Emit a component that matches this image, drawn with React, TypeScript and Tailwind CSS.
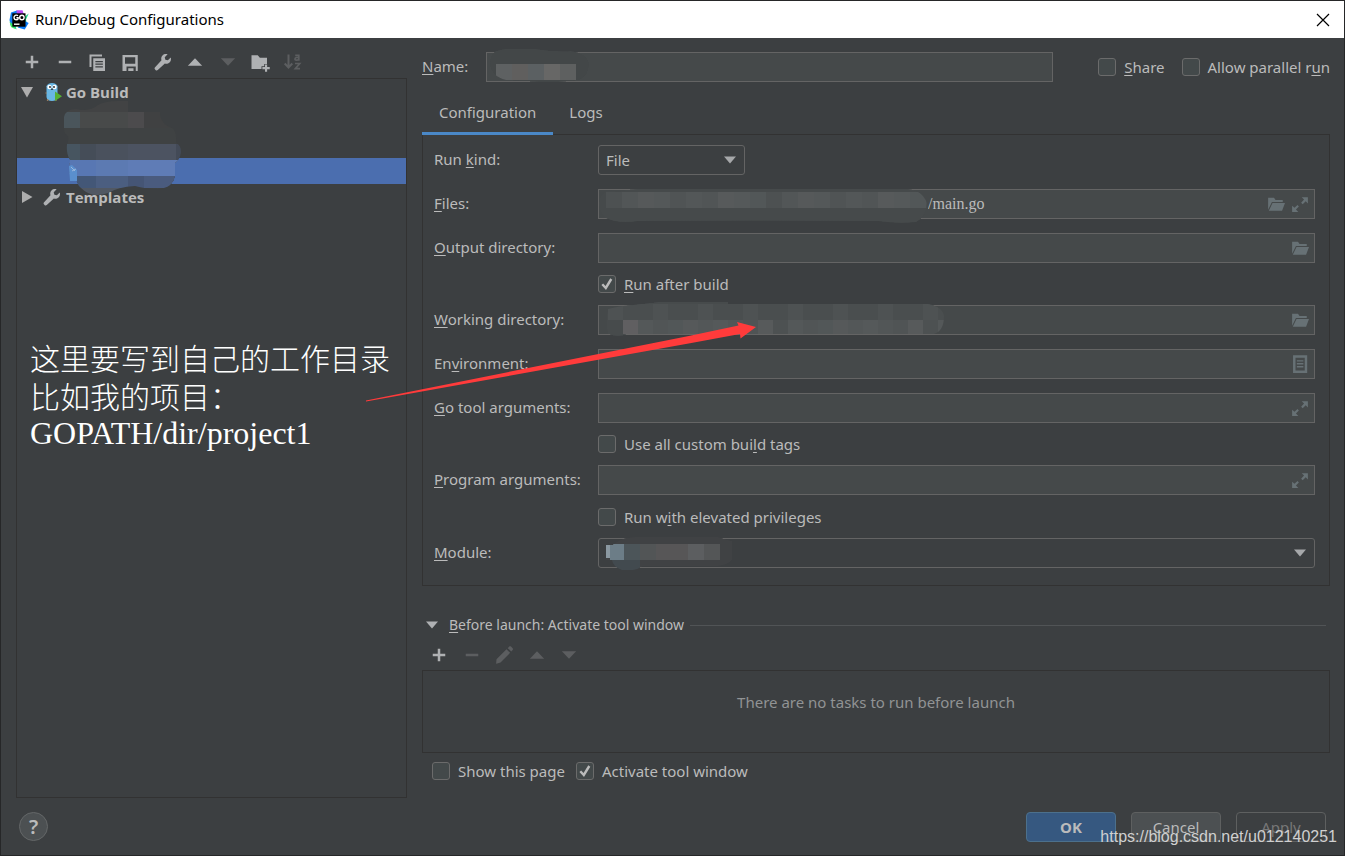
import React from "react";

type IconProps = { className?: string; children: React.ReactNode };

function Icon({ className = "text-[#afb1b3]", children }: IconProps) {
  return (
    <svg viewBox="0 0 16 16" aria-hidden="true" className={"size-5 " + className} fill="currentColor">
      {children}
    </svg>
  );
}

const shapes = {
  add: <path d="M7 3h2v4h4v2H9v4H7V9H3V7h4z" />,
  remove: <path d="M3 7h10v2H3z" />,
  copy: (
    <>
      <path d="M2 2h10v1.6H3.6V12H2z" />
      <path fillRule="evenodd" d="M5 5h9.4v10.2H5zM6.7 7.1v1h6v-1zM6.7 9.2v1h6v-1zM6.7 11.3v1h6v-1z" />
    </>
  ),
  save: <path fillRule="evenodd" d="M2 2.4h12.2v12.8H12.6v-3.6H5.2v3.6H2zM4 4.2v5.2h8.2V4.2zM6.6 13h4.2v2.2H6.6z" />,
  wrench: (
    <path d="M14.2 4.3 11.9 6.6 9.9 6.1 9.4 4.1 11.7 1.8C10.200 1.3 8.600 1.700 7.600 2.700 6.600 3.700 6.300 5.200 6.800 6.500L1.500 12.400C1.100 12.900 1.200 13.500 1.700 14L2.200 14.500C2.700 14.900 3.300 14.900 3.800 14.400L9.500 9.200C10.800 9.600 12.200 9.300 13.200 8.300 14.300 7.300 14.700 5.700 14.200 4.300z" />
  ),
  up: <path d="M2.300 11h11.400L8 5z" />,
  down: <path d="M2.300 5h11.400L8 11z" />,
  newFolder: (
    <path d="M1.200 2.600h5l1.700 1.900h5.700v5h-2.200v1.900H9.200v2.200H1.200zM12 10h1.700v2h2.100v1.700h-2.100v2.100H12v-2.100H9.900V12H12z" />
  ),
  pencil: <path d="M10 3.400 12.900 6.200 5.200 14 1.900 14.900 1.700 14.700 2 11.300zM11 2.500 12.200 1.200C12.600.8 13.200.8 13.600 1.200L14.900 2.500C15.300 2.900 15.300 3.500 14.900 3.900L13.800 5.200z" />,
  folder: <path d="M1 13V2.500h5.200L7.600 4.500H14v1.800H4.400zM4.900 7.200H16L13.400 14H1.600z" />,
  expand: <path d="M9.500 2H15v5.500L13.100 5.600 10.400 8.200 9 6.800 11.600 4zM1 9.500 3.100 11.400 5.800 8.800 7 10.200 4.400 12.900 6.500 15H1z" />,
  document: (
    <path fillRule="evenodd" d="M1.800.2h12.600v15.800H1.800zM4 2.400v11.400h8.200V2.400zM5.200 4.600v1.200h5.800V4.600zM5.200 7.200v1.200h5.800V7.200zM5.200 9.800v1.200h5.800V9.800z" />
  ),
};

function SortIcon() {
  return (
    <svg viewBox="0 0 20 20" aria-hidden="true" className="size-5 text-[#5c5e60]" fill="none" stroke="currentColor">
      <path strokeWidth="2" d="M5.500 2.500v12M1.700 11.500l3.800 4 3.800-4" />
      <path strokeWidth="1.700" d="M12.200 3.300h3.600V8.700M15.800 5.500h-2.300q-1.500.2-1.500 1.500t1.500 1.200 2.300-1M12 11.500h4.700l-4.400 5.200h4.700" />
    </svg>
  );
}

function ToolButton({ label, disabled, children }: { label: string; disabled?: boolean; children: React.ReactNode }) {
  return (
    <button type="button" aria-label={label} disabled={disabled} className="size-5 shrink-0">
      {children}
    </button>
  );
}

const DIM = "text-[#5c5e60]";

function GoLandLogo() {
  return (
    <svg viewBox="0 0 20 20" aria-hidden="true" className="size-5">
      <path fill="#0d7cf2" d="M2 2.500 8 .5l3 5-5 8-4 2.500L.5 10z" />
      <path fill="#b74af7" d="M7.500.3h6L15 5 8 6z" />
      <path fill="#21d789" d="M19.700 3.500 17 9.500 18 16l-4-8zM1.500 13l5 2 1 4.500L2 16z" />
      <path fill="#087cfa" d="M14 10l5.700 3-4 6.500-7-2z" />
      <path fill="#3bea62" d="M.5 11.500 5 16l1 3-4-2z" />
      <path fill="#000" d="M3.300 3.300h13.200v13.400H3.300z" />
      <g fill="none" stroke="#fff" strokeWidth="1.400">
        <path d="M9 5.800Q7.800 4.700 6.300 5.300 5 6 5 7.500 5.200 9.800 7.200 9.800q1.500 0 1.900-.8V7.700H7.400" />
        <circle cx="12.900" cy="7.500" r="2.200" />
        <path d="M5 14.200h5.500" />
      </g>
    </svg>
  );
}

function GopherIcon() {
  return (
    <svg viewBox="0 0 18 20" aria-hidden="true" className="h-5 w-[18px]">
      <path fill="#69b7e4" d="M3 3.500Q4 1 8 1t5 2.500q1 .3.500 1.700V15q-.5 4-5.500 4t-5.500-4V5.200Q1.800 3.800 3 3.500z" />
      <path stroke="#b08c66" strokeWidth="1.200" d="M1.500 11h1.200M3 18.500l1.500-1M12.500 18.500l-1.500-1" />
      <circle cx="5.500" cy="5" r="2.200" fill="#fff" />
      <circle cx="10.500" cy="5" r="2.200" fill="#fff" />
      <circle cx="6" cy="5" r=".9" fill="#222" />
      <circle cx="10" cy="5" r=".9" fill="#222" />
      <ellipse cx="8" cy="7.300" rx="1.200" ry=".8" fill="#333" />
      <path fill="#55b134" d="M11 9.500v9.500l7-4.700z" />
    </svg>
  );
}

const fieldBox = "h-[30px] w-full border border-[#646464] bg-[#45494a] px-2 text-[#bbbbbb] outline-none";

function Check({ id, checked, children }: { id: string; checked?: boolean; children: React.ReactNode }) {
  return (
    <div className="flex items-center gap-2 whitespace-nowrap">
      <span className="relative grid size-[18px] shrink-0 place-items-center">
        <input
          id={id}
          type="checkbox"
          defaultChecked={checked}
          className="peer size-[18px] appearance-none rounded-[3px] border border-[#6b6b6b] bg-[#43494a]"
        />
        <svg
          viewBox="0 0 18 18"
          aria-hidden="true"
          className="pointer-events-none invisible absolute inset-0 size-[18px] peer-checked:visible"
          fill="none"
          stroke="#bbbbbb"
          strokeWidth="2.400"
        >
          <path d="M4.300 9.200 7.800 13 13.300 4" />
        </svg>
      </span>
      <label htmlFor={id}>{children}</label>
    </div>
  );
}

function Row({ id, label, children }: { id: string; label: React.ReactNode; children: React.ReactNode }) {
  return (
    <div className="flex h-11 items-center">
      <label htmlFor={id} className="w-[164px] shrink-0 pb-[2px] whitespace-nowrap">
        {label}
      </label>
      <div className="relative min-w-0 flex-1">{children}</div>
    </div>
  );
}

function FieldActions({ children }: { children: React.ReactNode }) {
  return <div className="absolute inset-y-0 right-[5px] flex items-center gap-1">{children}</div>;
}

function FieldButton({ label, children }: { label: string; children: React.ReactNode }) {
  return (
    <button type="button" aria-label={label} className="grid size-5 place-items-center text-[#677175]">
      <svg viewBox="0 0 16 16" aria-hidden="true" className="size-[18px]" fill="currentColor">
        {children}
      </svg>
    </button>
  );
}

function Caret() {
  return (
    <svg viewBox="0 0 12 8" aria-hidden="true" className="pointer-events-none absolute top-[11px] right-[9px] h-2 w-3" fill="#a6a8aa">
      <path d="M0 .5h12L6 7.500z" />
    </svg>
  );
}

type Tile = [x: number, y: number, w: number, h: number, fill: string];

function Mosaic({
  id,
  box,
  outline,
  base,
  tiles,
  className,
}: {
  id: string;
  box: string;
  outline: string;
  base: string;
  tiles: Tile[];
  className: string;
}) {
  return (
    <svg viewBox={box} aria-hidden="true" className={"pointer-events-none absolute " + className}>
      <clipPath id={id}>
        <path d={outline} />
      </clipPath>
      <g clipPath={"url(#" + id + ")"} shapeRendering="crispEdges">
        <path d={outline} fill={base} />
        {tiles.map(([x, y, w, h, fill], i) => (
          <rect key={i} x={x} y={y} width={w} height={h} fill={fill} />
        ))}
      </g>
    </svg>
  );
}

const treeTiles: Tile[] = [
  [64, 100, 64, 12, "#424344"],
  [64, 112, 16, 16, "#4a555b"],
  [80, 112, 48, 16, "#484a4a"],
  [128, 112, 16, 16, "#4c4b4d"],
  [144, 112, 40, 16, "#404142"],
  [60, 128, 130, 16, "#3f4243"],
  [64, 144, 16, 16, "#475560"],
  [80, 144, 16, 16, "#454d58"],
  [96, 144, 32, 16, "#4a515d"],
  [128, 144, 48, 16, "#4c5361"],
  [176, 144, 8, 16, "#434a57"],
  [64, 160, 32, 16, "#5877b3"],
  [96, 160, 32, 16, "#5c7ab2"],
  [128, 160, 56, 16, "#5f7cb6"],
  [64, 176, 32, 12, "#435777"],
  [96, 176, 32, 12, "#4b5e80"],
  [128, 176, 16, 12, "#455575"],
  [144, 176, 40, 12, "#4a5b7e"],
  [72, 188, 50, 12, "#515863"],
];

const fileShades = ["#4d5152", "#525657", "#56595a", "#545859", "#505455", "#535758", "#515556", "#575a5b", "#55595a", "#525758"];

const fileTiles: Tile[] = Array.from({ length: 21 }, (_, i): Tile => [8 + i * 16, 4, 16, 16, fileShades[i % 10]]).concat([
  [8, 20, 340, 16, "#464a4b"],
]);

const workTiles: Tile[] = Array.from({ length: 23 }, (_, i): Tile => [10 + i * 15, 3, 15, 16, i % 3 ? "#4a4e4f" : "#4e5253"]).concat(
  Array.from({ length: 22 }, (_, i): Tile => [25 + i * 15, 19, 15, 14, i === 0 ? "#605f61" : fileShades[(i * 3) % 10]]),
);

const nameTiles: Tile[] = [
  [10, 16, 16, 16, "#5e6162"],
  [26, 16, 16, 16, "#605f5e"],
  [42, 16, 16, 16, "#5b6062"],
  [58, 16, 16, 16, "#676766"],
  [74, 16, 16, 16, "#5e6060"],
];

const moduleTiles: Tile[] = [
  [6, 10, 10, 14, "#8a98a1"],
  [12, 10, 14, 16, "#6c7d87"],
  [26, 10, 16, 16, "#4c5559"],
  [42, 10, 16, 16, "#525556"],
  [58, 10, 32, 16, "#575657"],
  [90, 10, 16, 16, "#5c5e60"],
  [106, 10, 16, 16, "#545657"],
  [10, 26, 32, 14, "#424a4f"],
];

function TreePanel() {
  return (
    <div className="relative flex-1 border border-[#323232]">
      <ul className="font-['Open_Sans',sans-serif] text-[15px] font-bold">
        <li className="flex h-[26px] items-center">
          <svg viewBox="0 0 12 12" aria-hidden="true" className="ml-1 size-3" fill="#adadad">
            <path d="M0 1h12L6 11.500z" />
          </svg>
          <span className="mr-1 ml-[11px]"><GopherIcon /></span>
          Go Build
        </li>
        <li className="h-[26px]" />
        <li className="h-[27px]" />
        <li className="h-[26px] bg-[#4b6eaf]" />
        <li className="flex h-[26px] items-center">
          <svg viewBox="0 0 12 12" aria-hidden="true" className="ml-1 size-3" fill="#adadad">
            <path d="M1 0v12L11.500 6z" />
          </svg>
          <span className="mr-1 ml-[9px]"><Icon>{shapes.wrench}</Icon></span>
          Templates
        </li>
      </ul>
      <Mosaic
        id="treeMask"
        box="60 99 124 98"
        className="top-[20px] left-[43px] h-[98px] w-[124px]"
        base="#3f4243"
        tiles={treeTiles}
        outline="M64 117Q66 109 76 109 90 112 98 105 105 101 118 101H128V112H160Q160 124 172 128 177 131 176 143 181 145 181 152 180 160 175 163V176Q173 188 158 189 145 189 135 186 118 187 108 193 92 199 81 188 76 184 76 176H70Q68 168 70 160 66 154 67 144 70 138 67 135 64 134 64 128z"
      />
      <svg viewBox="0 0 8 18" aria-hidden="true" className="pointer-events-none absolute top-[85px] left-[52px] h-[18px] w-2">
        <path fill="#5a8fce" d="M0 2l3-1 5 5v11H1z" />
        <path fill="none" stroke="#9ab6dc" d="M2 3l4 4M3 7l4-2" />
      </svg>
    </div>
  );
}

export default function App() {
  return (
    <div className="relative flex min-h-screen flex-col overflow-hidden border border-[#262728] bg-[#3c3f41] font-['Noto_Sans','Noto_Sans_CJK_SC',sans-serif] text-[15px] leading-5 text-[#bbbbbb] [&_u]:underline-offset-2">
      <header className="flex h-[37px] shrink-0 items-center bg-white pr-[14px] pl-2 text-black">
        <GoLandLogo />
        <h1 className="ml-[6px] pb-[2px]">Run/Debug Configurations</h1>
        <button type="button" aria-label="Close" className="ml-auto">
          <svg viewBox="0 0 14 14" aria-hidden="true" className="size-[14px]" stroke="#000" strokeWidth="1.200">
            <path d="M1 1l12 12M13 1 1 13" />
          </svg>
        </button>
      </header>

      <main className="flex flex-1 gap-[15px] pr-[14px] pl-[15px]">
        <aside className="flex w-[391px] shrink-0 flex-col">
          <div role="toolbar" className="mt-[14px] mb-[6px] ml-[6px] flex w-[281px] justify-between">
            <ToolButton label="Add"><Icon>{shapes.add}</Icon></ToolButton>
            <ToolButton label="Remove"><Icon>{shapes.remove}</Icon></ToolButton>
            <ToolButton label="Copy"><Icon>{shapes.copy}</Icon></ToolButton>
            <ToolButton label="Save"><Icon>{shapes.save}</Icon></ToolButton>
            <ToolButton label="Edit templates"><Icon>{shapes.wrench}</Icon></ToolButton>
            <ToolButton label="Move up"><Icon>{shapes.up}</Icon></ToolButton>
            <ToolButton label="Move down" disabled><Icon className={DIM}>{shapes.down}</Icon></ToolButton>
            <ToolButton label="New folder"><Icon>{shapes.newFolder}</Icon></ToolButton>
            <ToolButton label="Sort" disabled><SortIcon /></ToolButton>
          </div>
          <TreePanel />
        </aside>

        <section className="flex min-w-0 flex-1 flex-col pt-[14px]">
          <div className="flex h-[30px] items-center">
            <label htmlFor="name" className="w-16 shrink-0 pb-[2px]"><u>N</u>ame:</label>
            <div className="relative min-w-0 flex-1">
              <input id="name" className={fieldBox} />
              <Mosaic
                id="nameMask"
                box="0 0 110 35"
                className="-top-1 left-0 h-[35px] w-[110px]"
                base="#434748"
                tiles={nameTiles}
                outline="M10 3Q20 0 26 1H50Q70 4 85 3 100 5 103 15 103 28 93 32 70 36 20 32 5 28 4 16 4 6 10 3z"
              />
            </div>
            <div className="ml-[45px] flex shrink-0 gap-[17px]">
              <Check id="share"><u>S</u>hare</Check>
              <Check id="parallel">Allow parallel r<u>u</u>n</Check>
            </div>
          </div>

          <div role="tablist" className="mt-[10px] flex h-[43px] items-start border-b border-[#323232]">
            <button type="button" role="tab" aria-selected="true" className="h-[43px] border-b-[3px] border-[#4a88c7] px-[17px]">
              Configuration
            </button>
            <button type="button" role="tab" aria-selected="false" className="h-[43px] border-b-[3px] border-transparent px-4">
              Logs
            </button>
          </div>

          <form className="border-x border-b border-[#323232] pt-[3px] pr-[14px] pb-[10px] pl-[11px]">
            <Row id="kind" label={<>Run <u>k</u>ind:</>}>
              <div className="relative w-[147px]">
                <select id="kind" className="h-[30px] w-full appearance-none rounded-[3px] border border-[#646464] bg-[#3c3f41] px-[7px]">
                  <option>File</option>
                </select>
                <Caret />
              </div>
            </Row>
            <Row id="files" label={<><u>F</u>iles:</>}>
              <input
                id="files"
                defaultValue="/main.go"
                className="h-[30px] w-full border border-[#646464] bg-[#45494a] pr-14 pl-[329px] font-['Liberation_Serif',serif] text-base outline-none"
              />
              <Mosaic
                id="filesMask"
                box="0 0 332 36"
                className="-top-px left-0 h-9 w-[332px]"
                base="#464a4b"
                tiles={fileTiles}
                outline="M8 3Q14 1 20 4 30 0 60 1H310Q324 2 329 15 329 28 318 34 300 36 280 33 150 32 40 33 20 36 8 30 0 24 1 14 3 5 8 3z"
              />
              <FieldActions>
                <FieldButton label="Browse files">{shapes.folder}</FieldButton>
                <FieldButton label="Expand files">{shapes.expand}</FieldButton>
              </FieldActions>
            </Row>
            <Row id="output" label={<><u>O</u>utput directory:</>}>
              <input id="output" className={fieldBox} />
              <FieldActions>
                <FieldButton label="Browse output directory">{shapes.folder}</FieldButton>
              </FieldActions>
            </Row>
            <div className="flex h-7 items-center pl-[164px]">
              <Check id="runAfter" checked><u>R</u>un after build</Check>
            </div>
            <Row id="working" label={<><u>W</u>orking directory:</>}>
              <input id="working" className={fieldBox} />
              <Mosaic
                id="workingMask"
                box="0 0 348 38"
                className="-top-1 left-0 h-[38px] w-[348px]"
                base="#474b4c"
                tiles={workTiles}
                outline="M10 8Q20 5 35 4L60 1H130V3H330Q345 6 346 15 346 30 336 33H30Q20 37 10 33 7 20 10 8z"
              />
              <FieldActions>
                <FieldButton label="Browse working directory">{shapes.folder}</FieldButton>
              </FieldActions>
            </Row>
            <Row id="environment" label={<>En<u>v</u>ironment:</>}>
              <input id="environment" className={fieldBox} />
              <FieldActions>
                <FieldButton label="Edit environment variables">{shapes.document}</FieldButton>
              </FieldActions>
            </Row>
            <Row id="goArgs" label={<><u>G</u>o tool arguments:</>}>
              <input id="goArgs" className={fieldBox} />
              <FieldActions>
                <FieldButton label="Expand Go tool arguments">{shapes.expand}</FieldButton>
              </FieldActions>
            </Row>
            <div className="flex h-7 items-center pl-[164px]">
              <Check id="tags">Use all custom bui<u>l</u>d tags</Check>
            </div>
            <Row id="programArgs" label={<><u>P</u>rogram arguments:</>}>
              <input id="programArgs" className={fieldBox} />
              <FieldActions>
                <FieldButton label="Expand program arguments">{shapes.expand}</FieldButton>
              </FieldActions>
            </Row>
            <div className="flex h-[29px] items-center pl-[164px]">
              <Check id="elevated">Run w<u>i</u>th elevated privileges</Check>
            </div>
            <Row id="module" label={<><u>M</u>odule:</>}>
              <select id="module" className="block h-[30px] w-full appearance-none rounded-[3px] border border-[#646464] bg-[#3c3f41] px-[7px]" />
              <Mosaic
                id="moduleMask"
                box="0 0 136 36"
                className="-top-1 left-0 h-9 w-[136px]"
                base="#404244"
                tiles={moduleTiles}
                outline="M8 11H15Q20 6 28 4 40 2 60 3H120Q126 5 134 7V26Q130 31 120 32H45Q36 38 24 36 15 33 14 26H8z"
              />
              <Caret />
            </Row>
          </form>

          <div className="mt-7 flex h-[22px] items-center">
            <svg viewBox="0 0 12 8" aria-hidden="true" className="ml-1 h-2 w-3" fill="#afb1b3">
              <path d="M0 .5h12L6 7.500z" />
            </svg>
            <h2 className="ml-[11px] text-[14px]"><u>B</u>efore launch: Activate tool window</h2>
            <hr className="mr-1 ml-[6px] flex-1 border-[#515456]" />
          </div>
          <div role="toolbar" className="mt-[9px] ml-[7px] flex w-[150px] justify-between">
            <ToolButton label="Add task"><Icon>{shapes.add}</Icon></ToolButton>
            <ToolButton label="Remove task" disabled><Icon className={DIM}>{shapes.remove}</Icon></ToolButton>
            <ToolButton label="Edit task" disabled><Icon className={DIM}>{shapes.pencil}</Icon></ToolButton>
            <ToolButton label="Move task up" disabled><Icon className={DIM}>{shapes.up}</Icon></ToolButton>
            <ToolButton label="Move task down" disabled><Icon className={DIM}>{shapes.down}</Icon></ToolButton>
          </div>
          <div className="mt-[5px] flex h-[83px] items-center justify-center border border-[#323232] pb-5 text-[#919394]">
            There are no tasks to run before launch
          </div>
          <div className="mt-2 ml-[10px] flex gap-[11px]">
            <Check id="showPage">Show this page</Check>
            <Check id="activate" checked>Activate tool window</Check>
          </div>
        </section>
      </main>

      <footer className="flex h-[57px] shrink-0 items-center gap-[15px] px-[18px]">
        <button
          type="button"
          aria-label="Help"
          className="mr-auto grid size-[29px] place-items-center rounded-full border border-[#646768] bg-[#4c5052] text-xl font-semibold"
        >
          ?
        </button>
        <button type="button" className="h-[30px] w-[90px] rounded-[4px] border border-[#4c708c] bg-[#365880] font-bold">OK</button>
        <button type="button" className="h-[30px] w-[90px] rounded-[4px] border border-[#5e6060] bg-[#4c5052]">Cancel</button>
        <button type="button" disabled className="h-[30px] w-[90px] rounded-[4px] border border-[#5e6060] text-[#777777]">Apply</button>
      </footer>

      <div className="pointer-events-none absolute top-[337px] left-[29px] font-['Noto_Sans_CJK_SC',sans-serif] text-[30px] leading-[38px] font-light whitespace-nowrap text-white">
        <p>这里要写到自己的工作目录</p>
        <p>比如我的项目：</p>
        <p className="font-['Liberation_Serif',serif] text-[32px]">GOPATH/dir/project1</p>
      </div>
      <svg viewBox="365 320 392 84" aria-hidden="true" className="pointer-events-none absolute top-[319px] left-[364px] h-[84px] w-[392px]">
        <path fill="#ff3b3b" d="M366 400.500 690 335.700 738.500 325.500 737 322 756 327 740.500 338.500 740 334 690 343.300 366 401.500z" />
      </svg>
      <p className="pointer-events-none absolute right-[7px] bottom-[6px] font-['Liberation_Sans',sans-serif] text-base text-[#d0d0d0]">
        https://blog.csdn.net/u012140251
      </p>
    </div>
  );
}
